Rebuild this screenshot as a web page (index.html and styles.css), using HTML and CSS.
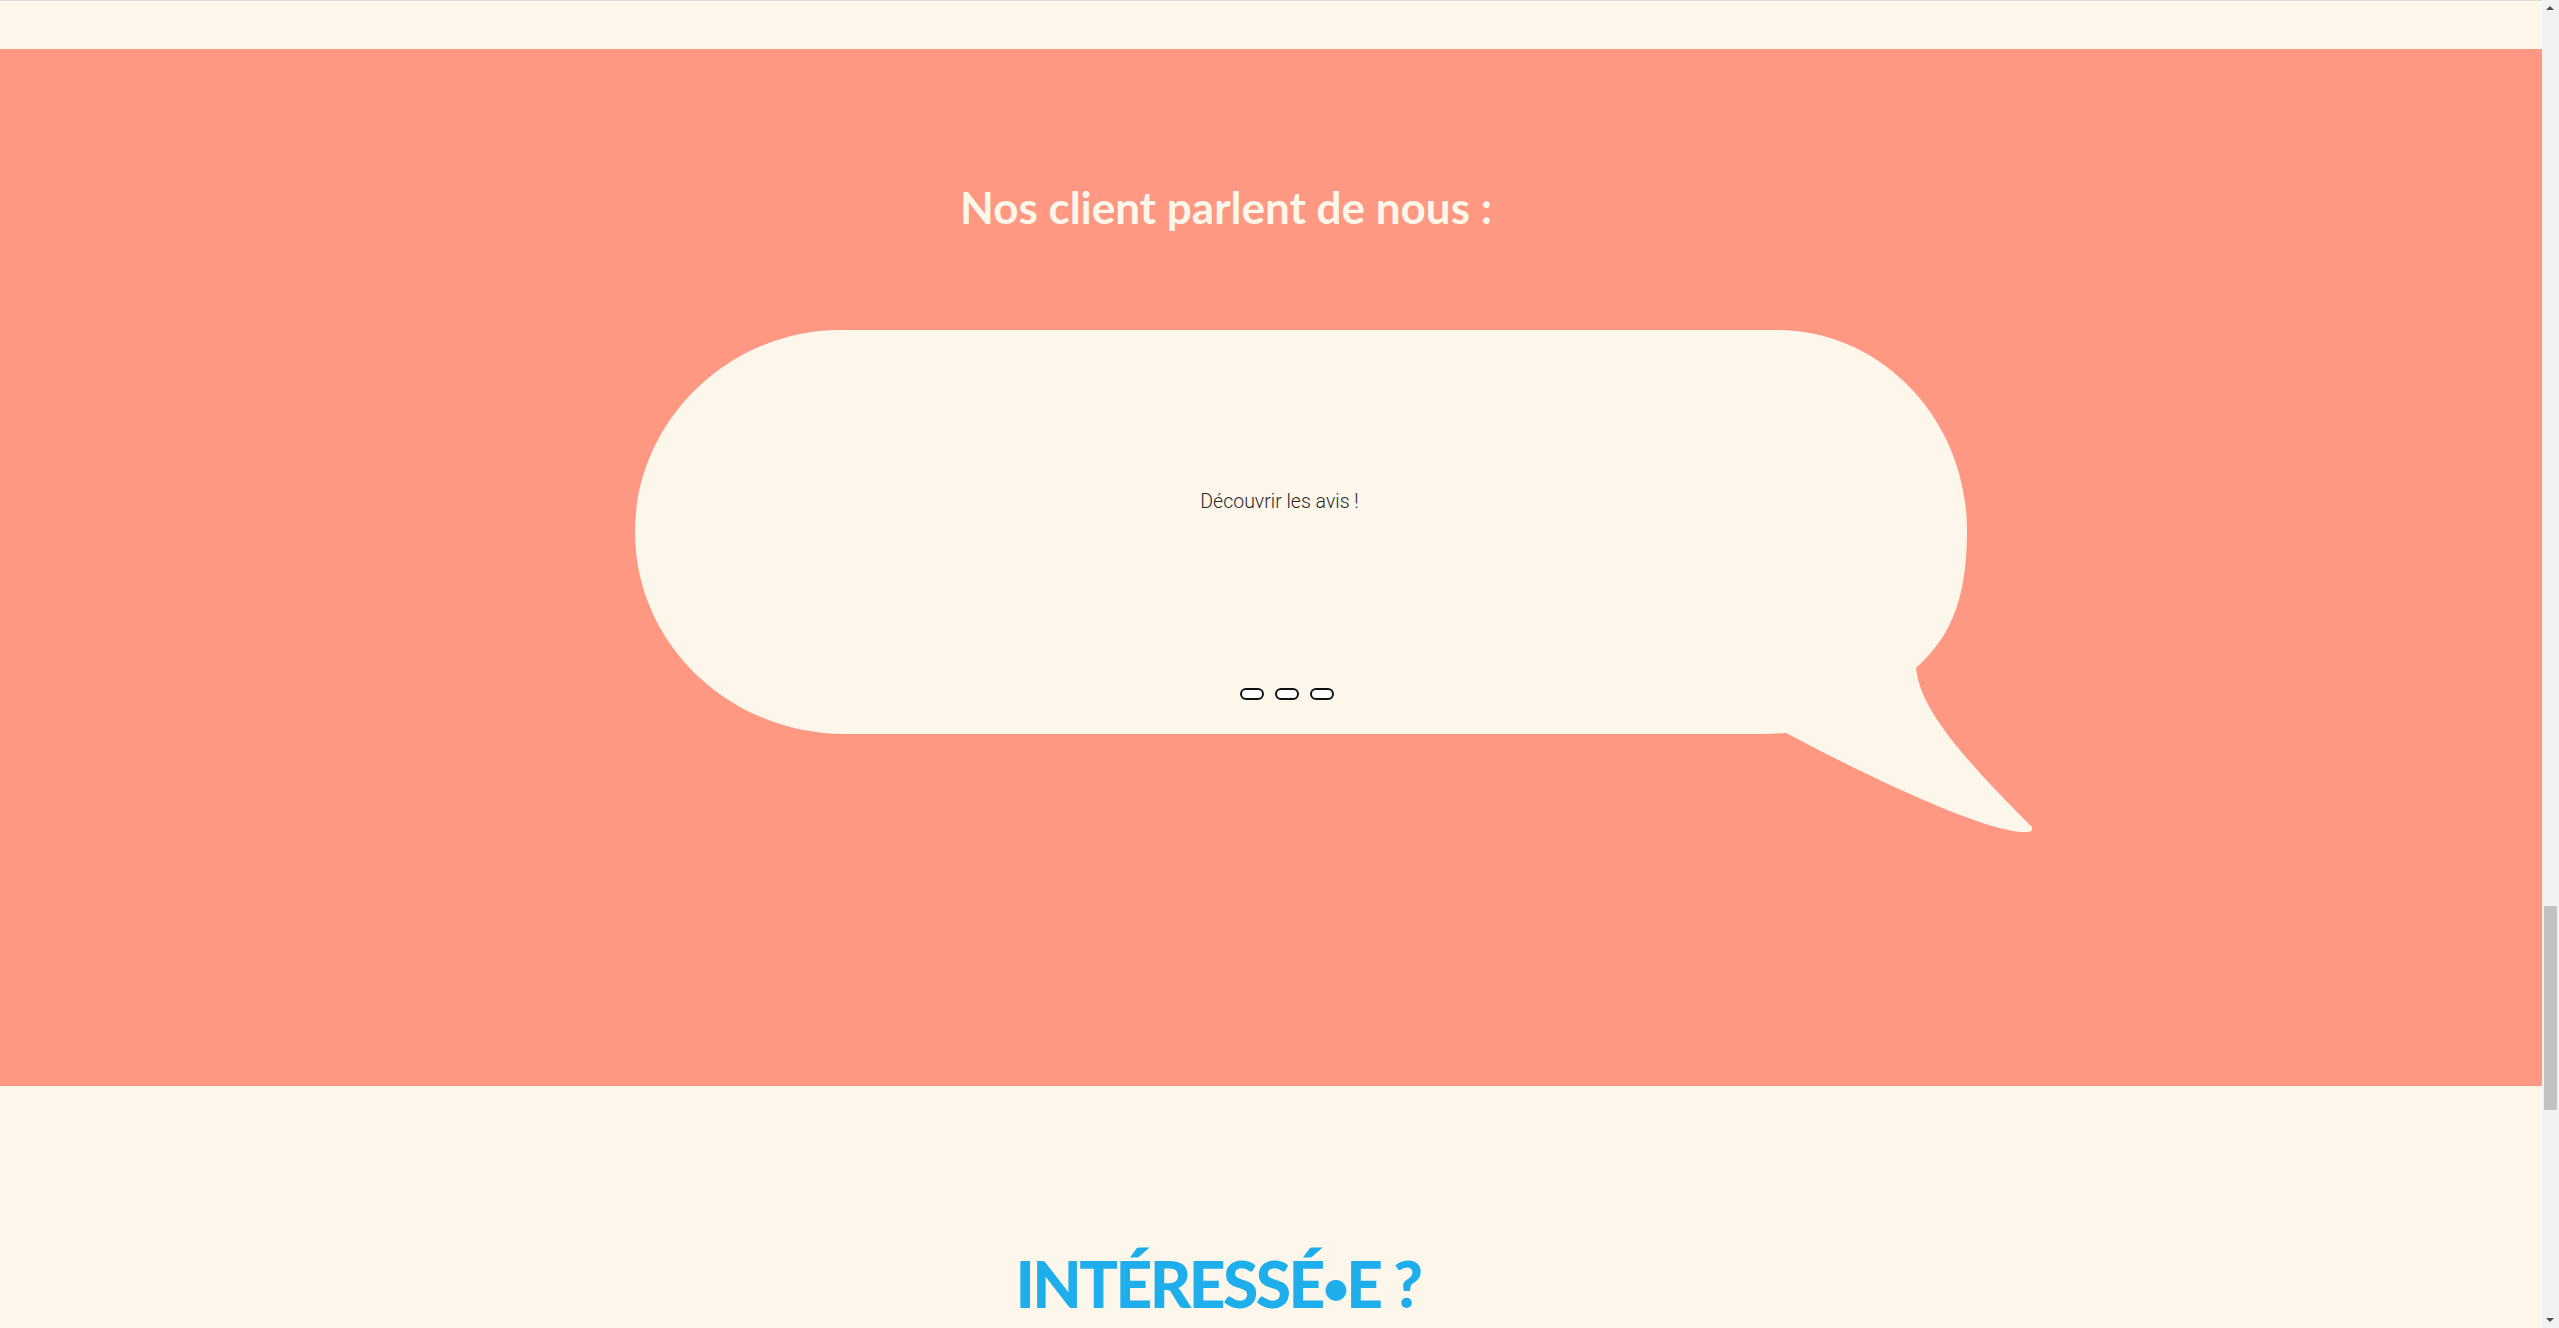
FILE: index.html
```html
<!DOCTYPE html>
<html lang="fr">
<head>
<meta charset="utf-8">
<title>Nos clients parlent de nous</title>
<link rel="stylesheet" href="styles.css">
</head>
<body>
<div class="page">
  <div class="topbar"></div>
  <section class="testimonials">
    <h2 class="testimonials-title">Nos client parlent de nous :</h2>
    <div class="bubble">
      <svg class="bubble-shape" viewBox="0 0 1397 502" width="1397" height="502" aria-hidden="true">
        <path d="M205,0 L1142,0 C1247,0 1332,90 1332,200 C1332,265 1318,305 1281,338 C1285,380 1330,430 1397,497 Q1400,503 1385,502 C1340,497 1240,450 1151,403 L1131,404 L210,404 C95,404 0,314 0,202 C0,90 95,0 205,0 Z"/>
      </svg>
      <div class="bubble-content">
        <p class="bubble-text">Découvrir les avis !</p>
        <div class="dots">
          <span class="dot"></span>
          <span class="dot"></span>
          <span class="dot"></span>
        </div>
      </div>
    </div>
  </section>
  <section class="interested">
    <h2 class="interested-title">INTÉRESSÉ<span class="bullet">•</span>E ?</h2>
  </section>
</div>
<div class="scrollbar">
  <span class="scroll-arrow scroll-arrow-up"></span>
  <span class="scroll-thumb"></span>
  <span class="scroll-arrow scroll-arrow-down"></span>
</div>
</body>
</html>
```

FILE: styles.css
```css
html, body {
  margin: 0;
  padding: 0;
  height: 100%;
  overflow: hidden;
}

body {
  background: #fdf6ea;
  font-family: "Liberation Sans", Arial, sans-serif;
}

.page {
  margin-right: 17px;
}

.topbar {
  height: 48px;
  border-top: 1px solid #dedbd7;
  background: #fdf6ea;
}

.testimonials {
  background: #fe9882;
  height: 1037px;
  box-sizing: border-box;
  padding-top: 131px;
  display: flex;
  flex-direction: column;
  align-items: center;
}

.testimonials-title {
  margin: 0;
  padding-right: 90px;
  font-family: "Lato", "Open Sans", sans-serif;
  font-weight: 700;
  font-size: 44px;
  line-height: 54px;
  color: #fdf6ea;
  letter-spacing: 0;
}

.bubble {
  position: relative;
  width: 1397px;
  height: 502px;
  margin-top: 96px;
  margin-left: 124px;
}

.bubble-shape {
  position: absolute;
  left: 0;
  top: 0;
  fill: #fdf6ea;
}

.bubble-content {
  position: relative;
  width: 1290px;
  padding-top: 161px;
  display: flex;
  flex-direction: column;
  align-items: center;
}

.bubble-text {
  margin: 0;
  font-family: "Roboto", "Liberation Sans", sans-serif;
  font-weight: 300;
  font-size: 19.5px;
  line-height: 22px;
  color: #2a2929;
}

.dots {
  margin-top: 175px;
  padding-left: 14px;
  display: flex;
  gap: 11px;
}

.dot {
  display: block;
  width: 24px;
  height: 12px;
  box-sizing: border-box;
  border: 2px solid #111;
  border-radius: 6px;
  background: #fff;
}

.interested {
  display: flex;
  flex-direction: column;
  align-items: center;
  padding-top: 159px;
  height: 400px;
}

.interested-title {
  margin: 0;
  padding-right: 106px;
  font-family: "Lato", "Open Sans", sans-serif;
  font-weight: 900;
  font-size: 64px;
  line-height: 78px;
  letter-spacing: -2.5px;
  color: #1faeec;
}

.bullet {
  font-size: 0.7em;
  vertical-align: 0.08em;
}

.scrollbar {
  position: fixed;
  top: 0;
  right: 0;
  width: 17px;
  height: 100%;
  background: #f1f1f1;
}

.scroll-thumb {
  position: absolute;
  left: 2px;
  width: 13px;
  top: 906px;
  height: 204px;
  background: #c1c1c1;
}

.scroll-arrow {
  position: absolute;
  left: 4px;
  width: 0;
  height: 0;
  border-left: 4px solid transparent;
  border-right: 4px solid transparent;
}

.scroll-arrow-up {
  top: 6px;
  border-bottom: 4px solid #505050;
}

.scroll-arrow-down {
  bottom: 6px;
  border-top: 4px solid #505050;
}
```
